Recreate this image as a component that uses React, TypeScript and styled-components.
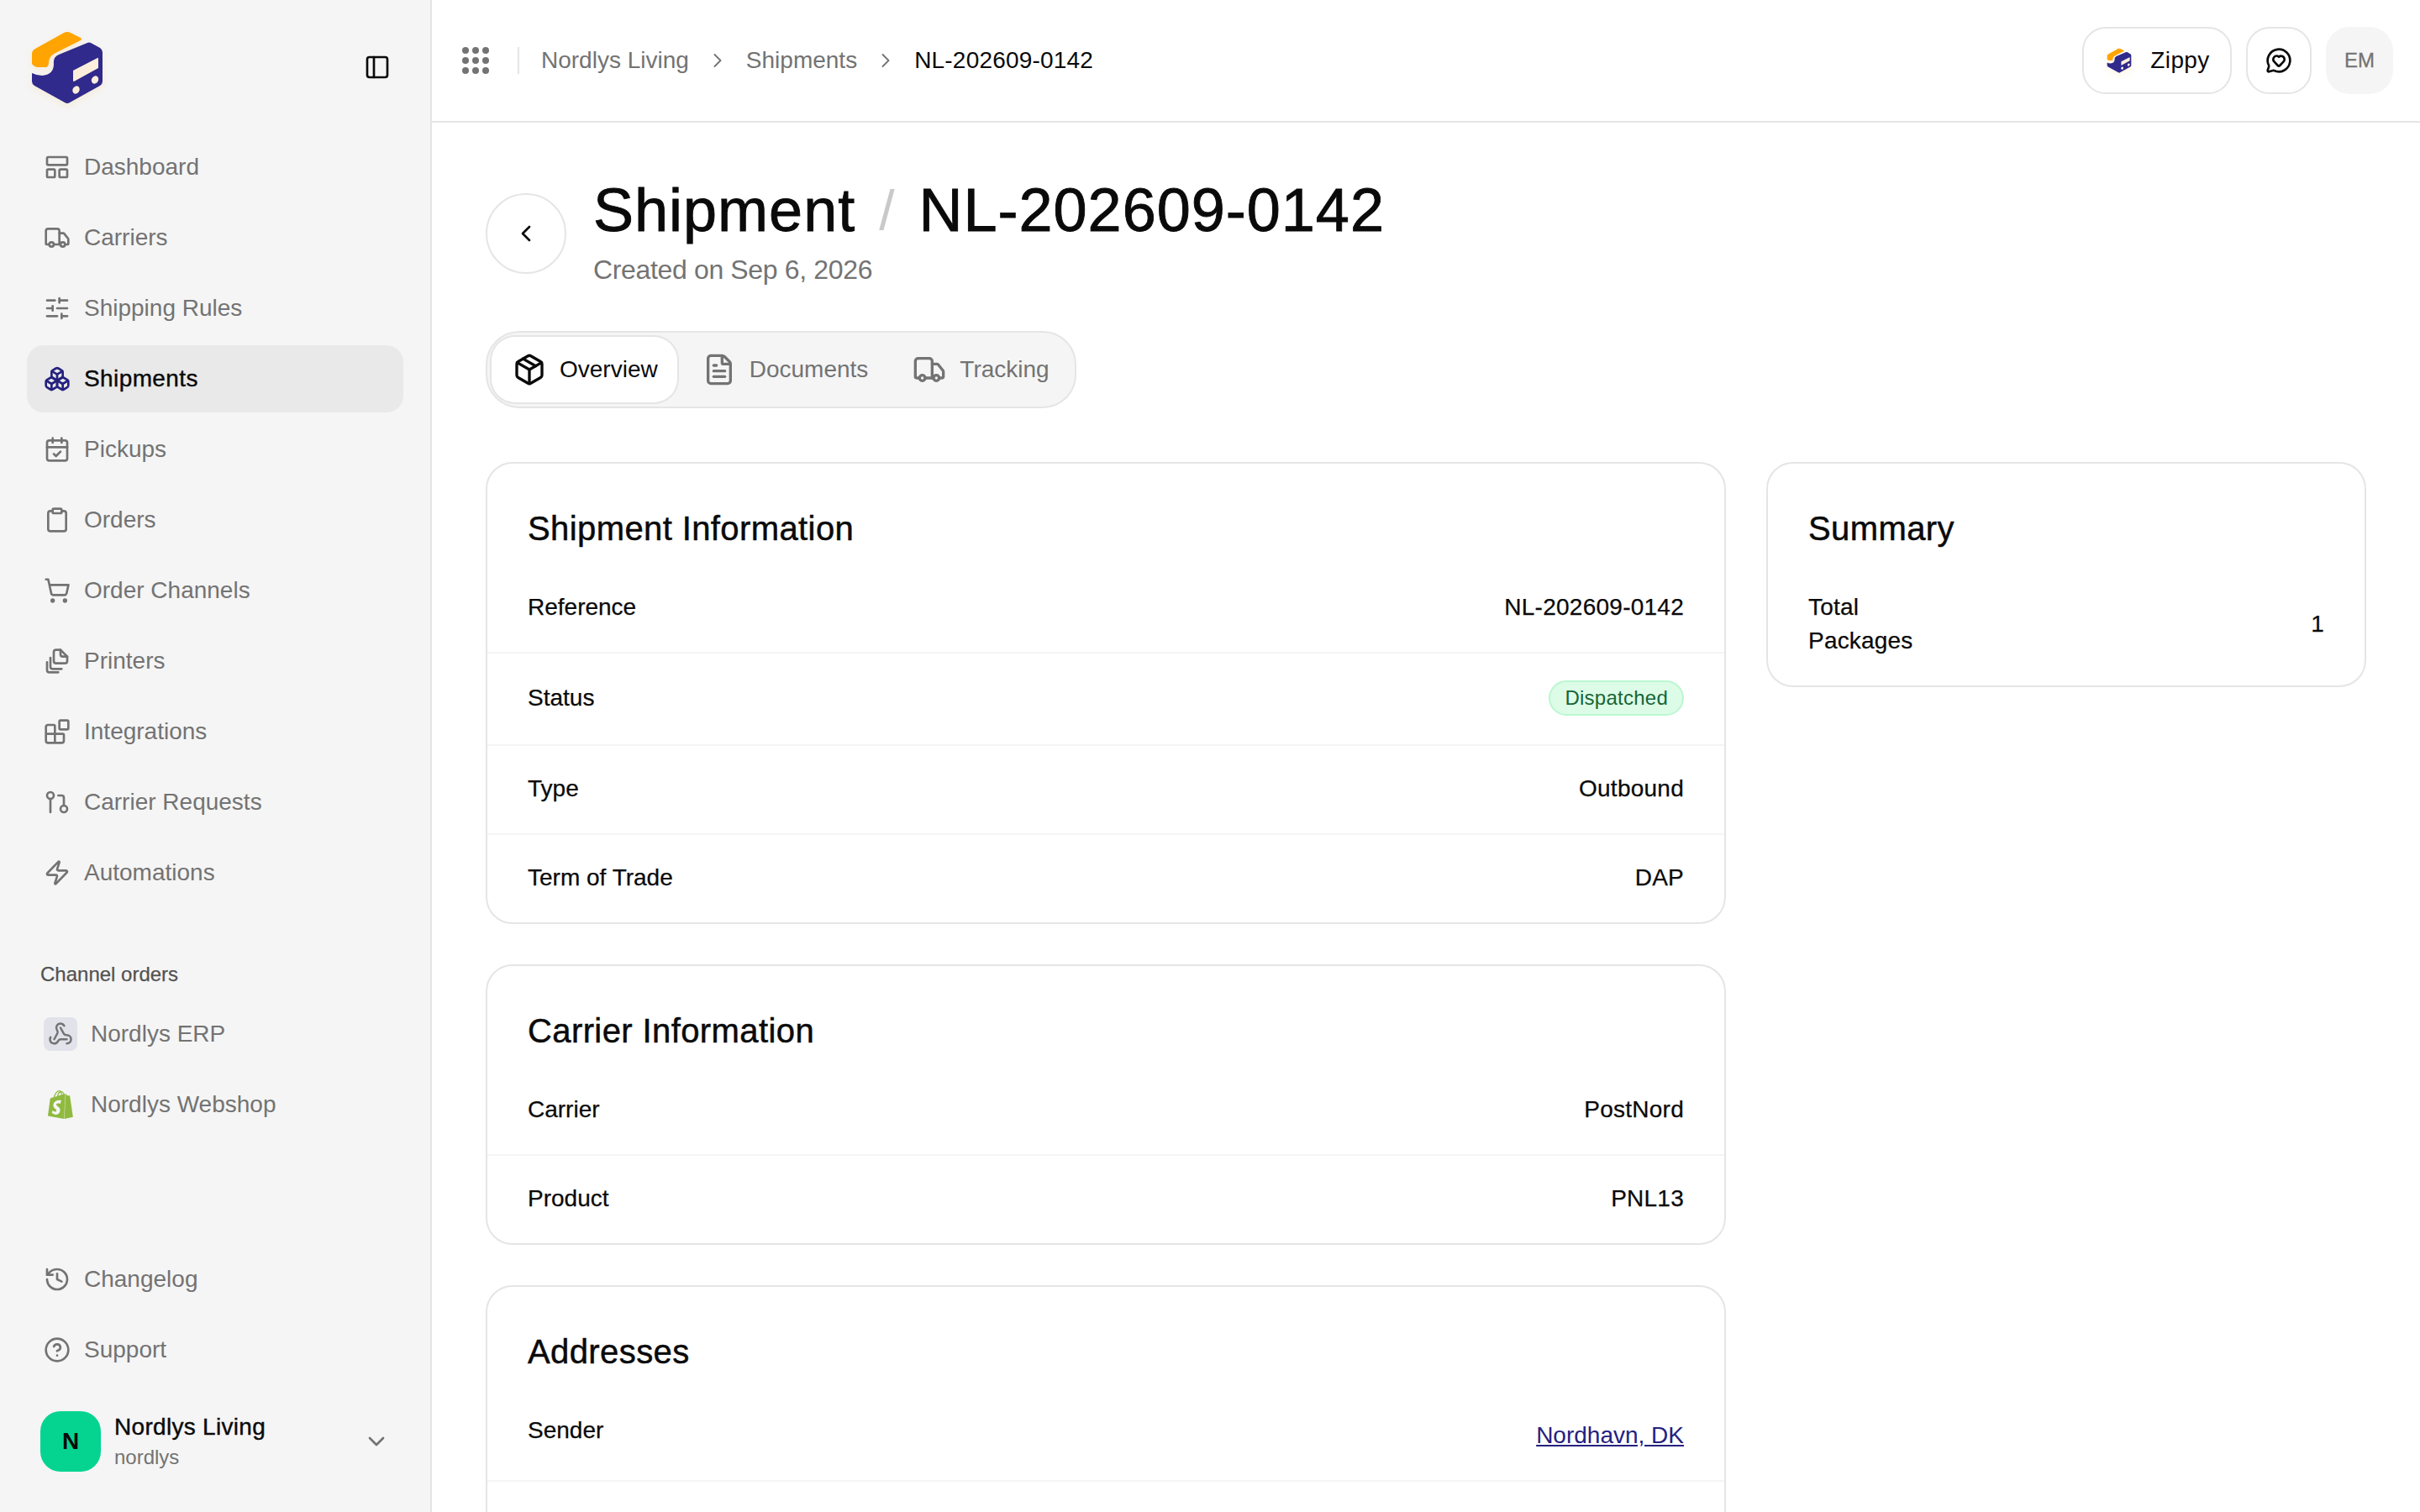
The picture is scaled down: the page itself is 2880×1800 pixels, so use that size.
import styled, { createGlobalStyle } from "styled-components";
import {
  Blocks,
  Boxes,
  CalendarCheck,
  ChevronDown,
  ChevronLeft,
  ChevronRight,
  CircleHelp,
  Clipboard,
  FileText,
  GitPullRequest,
  History,
  LayoutPanelTop,
  MessageCircleHeart,
  Package,
  PanelLeft,
  ShoppingCart,
  SlidersHorizontal,
  Truck,
  Webhook,
  Zap,
} from "lucide-react";
import { SiShopify } from "react-icons/si";

const GlobalStyle = createGlobalStyle`
  * { box-sizing: border-box; }
  html, body { margin: 0; padding: 0; background: #fff; }
  body {
    font-family: "Liberation Sans", Arial, sans-serif;
    font-size: 28px;
    color: #0a0a0a;
  }
`;

const Shell = styled.div`
  display: flex;
  width: 2880px;
  height: 1800px;
  overflow: hidden;
`;

const Sidebar = styled.aside`
  flex: 0 0 514px;
  display: flex;
  flex-direction: column;
  padding: 0 32px 48px;
  background: #f5f5f5;
  border-right: 2px solid #e5e5e5;
`;

const BrandRow = styled.div`
  flex: 0 0 159px;
  display: flex;
  align-items: flex-start;
  justify-content: space-between;
  padding: 36px 15px 0 4px;
`;

const ToggleButton = styled.span`
  display: flex;
  margin-top: 28px;
  color: #0a0a0a;
`;

const NavList = styled.nav`
  display: flex;
  flex-direction: column;
  gap: 4px;
`;

const NavItem = styled.a<{ $active?: boolean }>`
  display: flex;
  align-items: center;
  gap: 16px;
  height: 80px;
  padding: 0 20px;
  border-radius: 20px;
  background: ${(props) => (props.$active ? "#e9e9e9" : "transparent")};
  color: ${(props) => (props.$active ? "#0a0a0a" : "#737373")};
  letter-spacing: ${(props) => (props.$active ? "0.4px" : "0")};
  -webkit-text-stroke: ${(props) => (props.$active ? "0.4px #0a0a0a" : "0")};
  line-height: 34px;

  svg {
    flex: none;
    color: ${(props) => (props.$active ? "#25217f" : "#737373")};
  }
`;

const SectionLabel = styled.div`
  margin: 61px 0 11px;
  padding-left: 16px;
  font-size: 24px;
  line-height: 40px;
  color: #525252;
  -webkit-text-stroke: 0.25px #525252;
`;

const ChannelBadge = styled.span<{ $tinted?: boolean }>`
  flex: none;
  display: flex;
  align-items: center;
  justify-content: center;
  width: 40px;
  height: 40px;
  border-radius: 8px;
  background: ${(props) => (props.$tinted ? "#e1e2ea" : "transparent")};

  svg {
    color: ${(props) => (props.$tinted ? "#737373" : "#8fba3f")};
  }
`;

const SidebarFooter = styled.div`
  margin-top: auto;
  display: flex;
  flex-direction: column;
  gap: 4px;
`;

const UserRow = styled.div`
  display: flex;
  align-items: center;
  gap: 16px;
  margin-top: 29px;
  padding: 0 16px;
`;

const Avatar = styled.span`
  flex: none;
  display: flex;
  align-items: center;
  justify-content: center;
  width: 72px;
  height: 72px;
  border-radius: 24px;
  background: #05d490;
  font-size: 28px;
  font-weight: 700;
  color: #0a0a0a;
`;

const UserText = styled.div`
  flex: 1;
  display: flex;
  flex-direction: column;
  gap: 2px;
`;

const UserName = styled.div`
  font-size: 28px;
  line-height: 36px;
  letter-spacing: 0.3px;
  -webkit-text-stroke: 0.4px #0a0a0a;
`;

const UserHandle = styled.div`
  font-size: 24px;
  line-height: 32px;
  color: #737373;
`;

const Content = styled.div`
  flex: 1;
  min-width: 0;
  display: flex;
  flex-direction: column;
`;

const Topbar = styled.header`
  flex: 0 0 146px;
  display: flex;
  align-items: center;
  padding: 0 32px 0 36px;
  border-bottom: 2px solid #e5e5e5;
`;

const GridIcon = styled.svg`
  flex: none;
  color: #737373;
`;

const TopDivider = styled.span`
  width: 2px;
  height: 32px;
  margin: 0 26px 0 34px;
  background: #e5e5e5;
`;

const Crumbs = styled.div`
  display: flex;
  align-items: center;
  gap: 20px;
  svg {
    color: #737373;
  }
`;

const Crumb = styled.span<{ $current?: boolean }>`
  color: ${(props) => (props.$current ? "#0a0a0a" : "#737373")};
  letter-spacing: ${(props) => (props.$current ? "0.2px" : "0")};
`;

const TopActions = styled.div`
  margin-left: auto;
  display: flex;
  align-items: center;
  gap: 17px;
`;

const TopButton = styled.button`
  display: flex;
  align-items: center;
  justify-content: center;
  gap: 22px;
  height: 80px;
  width: 78px;
  padding: 0;
  border: 2px solid #e5e5e5;
  border-radius: 28px;
  background: #fff;
  color: #0a0a0a;
  font: inherit;
`;

const ZippyButton = styled(TopButton)`
  width: 178px;
  padding-left: 3px;
  letter-spacing: 0.4px;
`;

const UserChip = styled.span`
  display: flex;
  align-items: center;
  justify-content: center;
  width: 80px;
  height: 80px;
  border-radius: 28px;
  background: #f5f5f5;
  font-size: 24px;
  color: #737373;
  -webkit-text-stroke: 0.3px #737373;
`;

const Main = styled.main`
  flex: 1;
  min-height: 0;
  overflow: hidden;
  padding: 60px 64px 0;
`;

const PageHead = styled.div`
  display: flex;
  align-items: center;
  gap: 32px;
`;

const BackButton = styled.button`
  flex: none;
  display: flex;
  align-items: center;
  justify-content: center;
  width: 96px;
  height: 96px;
  margin-top: 8px;
  padding: 0;
  border: 2px solid #e5e5e5;
  border-radius: 50%;
  background: #fff;
  color: #0a0a0a;
`;

const HeadText = styled.div`
  display: flex;
  flex-direction: column;
  gap: 6px;
`;

const PageTitle = styled.h1`
  display: flex;
  gap: 28px;
  margin: 0;
  font-size: 72px;
  font-weight: 400;
  line-height: 88px;
  letter-spacing: 1px;
  -webkit-text-stroke: 0.9px #0a0a0a;
`;

const TitleSlash = styled.span`
  color: #c9c9c9;
  -webkit-text-stroke: 0;
  font-weight: 400;
  font-size: 66px;
`;

const PageSub = styled.div`
  font-size: 32px;
  line-height: 42px;
  letter-spacing: -0.35px;
  color: #737373;
`;

const TabBar = styled.div`
  display: inline-flex;
  gap: 5px;
  margin-top: 52px;
  padding: 5px 7px 5px 5px;
  border: 2px solid #e5e5e5;
  border-radius: 40px;
  background: #f5f5f5;
  vertical-align: top;
`;

const Tab = styled.div<{ $active?: boolean }>`
  display: flex;
  align-items: center;
  gap: 16px;
  height: 78px;
  padding: 0 23px 0 25px;
  border-radius: 28px;
  background: ${(props) => (props.$active ? "#fff" : "transparent")};
  box-shadow: ${(props) => (props.$active ? "0 0 0 2px #e5e5e5" : "none")};
  color: ${(props) => (props.$active ? "#0a0a0a" : "#737373")};
`;

const Columns = styled.div`
  display: grid;
  grid-template-columns: 1fr 714px;
  gap: 48px;
  align-items: start;
  margin-top: 64px;
`;

const Stack = styled.div`
  display: flex;
  flex-direction: column;
  gap: 48px;
`;

const Card = styled.section`
  border: 2px solid #e5e5e5;
  border-radius: 32px;
  padding: 0 48px;
  background: #fff;
`;

const CardTitle = styled.h2`
  margin: 0;
  padding: 51px 0 17px;
  font-size: 40px;
  font-weight: 400;
  line-height: 52px;
  letter-spacing: 0.4px;
  -webkit-text-stroke: 0.5px #0a0a0a;
`;

const Row = styled.div`
  display: flex;
  align-items: center;
  justify-content: space-between;
  margin: 0 -48px;
  padding: 32px 48px 34px;
  line-height: 38px;
  border-bottom: 2px solid #f5f5f5;
  -webkit-text-stroke: 0.25px #0a0a0a;

  span + span {
    letter-spacing: 0.25px;
  }

  &:last-child {
    border-bottom: 0;
  }
`;

const AddressRow = styled(Row)`
  align-items: flex-start;
`;

const SummaryRow = styled.div`
  display: flex;
  align-items: center;
  justify-content: space-between;
  padding: 31px 0 33px;
  line-height: 40px;
  letter-spacing: 0.2px;
  -webkit-text-stroke: 0.25px #0a0a0a;
`;

const SummaryLabel = styled.span`
  max-width: 150px;
`;

const StatusBadge = styled.span`
  display: inline-flex;
  align-items: center;
  height: 42px;
  padding: 0 17px;
  border: 2px solid #bbf7d0;
  border-radius: 21px;
  background: #dcfce7;
  font-size: 24px;
  color: #166534;
  -webkit-text-stroke: 0;
`;

const AddressLink = styled.a`
  margin-top: 6px;
  color: #25217f;
  text-decoration: underline;
  -webkit-text-stroke: 0;
`;

const Logo = ({ size }: { size: number }) => (
  <svg
    width={size}
    height={size}
    viewBox="36 36 88 88"
    style={{ filter: "drop-shadow(0 3px 4px rgba(255, 164, 0, 0.12))" }}
  >
    <path
      d="M42 58 L76 39 Q80 37 84 39 L96 45 Q98 47 96 48 L70 61 Q58 66 58 74 Q58 80 54 80 L44 80 Q38 78 38 75 L38 64 Q38 60 42 58Z"
      fill="#ffa400"
    />
    <path
      d="M104 51 Q106 50 108 51 L119 57 Q122 59 122 62 L122 97 Q122 100 119 102 L83 122 Q80 124 77 122 L41 102 Q38 100 38 97 L38 87 Q44 90 50 90 Q64 89 64 76 Q63 68 70 65Z"
      fill="#2f2a8b"
    />
    <path d="M87 84 L116 69 Q117 68 117 70 L117 81 L88 97 Q87 97 87 96Z" fill="#fbeedd" />
    <ellipse cx="90.5" cy="107" rx="4" ry="4.8" transform="rotate(30 90.5 107)" fill="#fbeedd" />
    <ellipse cx="113" cy="95" rx="4" ry="4.8" transform="rotate(30 113 95)" fill="#fbeedd" />
  </svg>
);

const PrintersIcon = ({ size }: { size: number }) => (
  <svg
    width={size}
    height={size}
    viewBox="0 0 24 24"
    fill="none"
    stroke="currentColor"
    strokeWidth="2"
    strokeLinecap="round"
    strokeLinejoin="round"
  >
    <path d="M15 2h-4a2 2 0 0 0-2 2v8a2 2 0 0 0 2 2h8a2 2 0 0 0 2-2V8z" />
    <path d="M15 2v4a2 2 0 0 0 2 2h4" />
    <path d="M6 9v8a2 2 0 0 0 2 2h8" />
    <path d="M3 13v7a2 2 0 0 0 2 2h8" />
  </svg>
);

const GRID_DOTS = [4, 16, 28];

const NAV_ITEMS = [
  { label: "Dashboard", icon: LayoutPanelTop },
  { label: "Carriers", icon: Truck },
  { label: "Shipping Rules", icon: SlidersHorizontal },
  { label: "Shipments", icon: Boxes, active: true },
  { label: "Pickups", icon: CalendarCheck },
  { label: "Orders", icon: Clipboard },
  { label: "Order Channels", icon: ShoppingCart },
  { label: "Printers", icon: PrintersIcon },
  { label: "Integrations", icon: Blocks },
  { label: "Carrier Requests", icon: GitPullRequest },
  { label: "Automations", icon: Zap },
];

const TABS = [
  { label: "Overview", icon: Package, active: true },
  { label: "Documents", icon: FileText },
  { label: "Tracking", icon: Truck },
];

const App = () => (
  <>
    <GlobalStyle />
    <Shell>
      <Sidebar>
        <BrandRow>
          <Logo size={88} />
          <ToggleButton>
            <PanelLeft size={32} />
          </ToggleButton>
        </BrandRow>
        <NavList>
          {NAV_ITEMS.map(({ label, icon: Icon, active }) => (
            <NavItem key={label} $active={active}>
              <Icon size={32} />
              {label}
            </NavItem>
          ))}
        </NavList>
        <SectionLabel>Channel orders</SectionLabel>
        <NavList>
          <NavItem>
            <ChannelBadge $tinted>
              <Webhook size={30} />
            </ChannelBadge>
            Nordlys ERP
          </NavItem>
          <NavItem>
            <ChannelBadge>
              <SiShopify size={34} />
            </ChannelBadge>
            Nordlys Webshop
          </NavItem>
        </NavList>
        <SidebarFooter>
          <NavItem>
            <History size={32} />
            Changelog
          </NavItem>
          <NavItem>
            <CircleHelp size={32} />
            Support
          </NavItem>
          <UserRow>
            <Avatar>N</Avatar>
            <UserText>
              <UserName>Nordlys Living</UserName>
              <UserHandle>nordlys</UserHandle>
            </UserText>
            <ChevronDown size={32} color="#737373" />
          </UserRow>
        </SidebarFooter>
      </Sidebar>
      <Content>
        <Topbar>
          <GridIcon width="32" height="32" viewBox="0 0 32 32" fill="currentColor">
            {GRID_DOTS.map((cy) =>
              GRID_DOTS.map((cx) => <circle key={`${cx}-${cy}`} cx={cx} cy={cy} r="4" />)
            )}
          </GridIcon>
          <TopDivider />
          <Crumbs>
            <Crumb>Nordlys Living</Crumb>
            <ChevronRight size={28} strokeWidth={1.6} />
            <Crumb>Shipments</Crumb>
            <ChevronRight size={28} strokeWidth={1.6} />
            <Crumb $current>NL-202609-0142</Crumb>
          </Crumbs>
          <TopActions>
            <ZippyButton>
              <Logo size={30} />
              Zippy
            </ZippyButton>
            <TopButton>
              <MessageCircleHeart size={32} />
            </TopButton>
            <UserChip>EM</UserChip>
          </TopActions>
        </Topbar>
        <Main>
          <PageHead>
            <BackButton>
              <ChevronLeft size={32} />
            </BackButton>
            <HeadText>
              <PageTitle>
                <span>Shipment</span>
                <TitleSlash>/</TitleSlash>
                <span>NL-202609-0142</span>
              </PageTitle>
              <PageSub>Created on Sep 6, 2026</PageSub>
            </HeadText>
          </PageHead>
          <TabBar>
            {TABS.map(({ label, icon: Icon, active }) => (
              <Tab key={label} $active={active}>
                <Icon size={40} />
                {label}
              </Tab>
            ))}
          </TabBar>
          <Columns>
            <Stack>
              <Card>
                <CardTitle>Shipment Information</CardTitle>
                <Row>
                  <span>Reference</span>
                  <span>NL-202609-0142</span>
                </Row>
                <Row>
                  <span>Status</span>
                  <StatusBadge>Dispatched</StatusBadge>
                </Row>
                <Row>
                  <span>Type</span>
                  <span>Outbound</span>
                </Row>
                <Row>
                  <span>Term of Trade</span>
                  <span>DAP</span>
                </Row>
              </Card>
              <Card>
                <CardTitle>Carrier Information</CardTitle>
                <Row>
                  <span>Carrier</span>
                  <span>PostNord</span>
                </Row>
                <Row>
                  <span>Product</span>
                  <span>PNL13</span>
                </Row>
              </Card>
              <Card>
                <CardTitle>Addresses</CardTitle>
                <AddressRow>
                  <span>Sender</span>
                  <AddressLink>Nordhavn, DK</AddressLink>
                </AddressRow>
                <Row>
                  <span>&nbsp;</span>
                </Row>
              </Card>
            </Stack>
            <Card>
              <CardTitle>Summary</CardTitle>
              <SummaryRow>
                <SummaryLabel>Total Packages</SummaryLabel>
                <span>1</span>
              </SummaryRow>
            </Card>
          </Columns>
        </Main>
      </Content>
    </Shell>
  </>
);

export default App;
